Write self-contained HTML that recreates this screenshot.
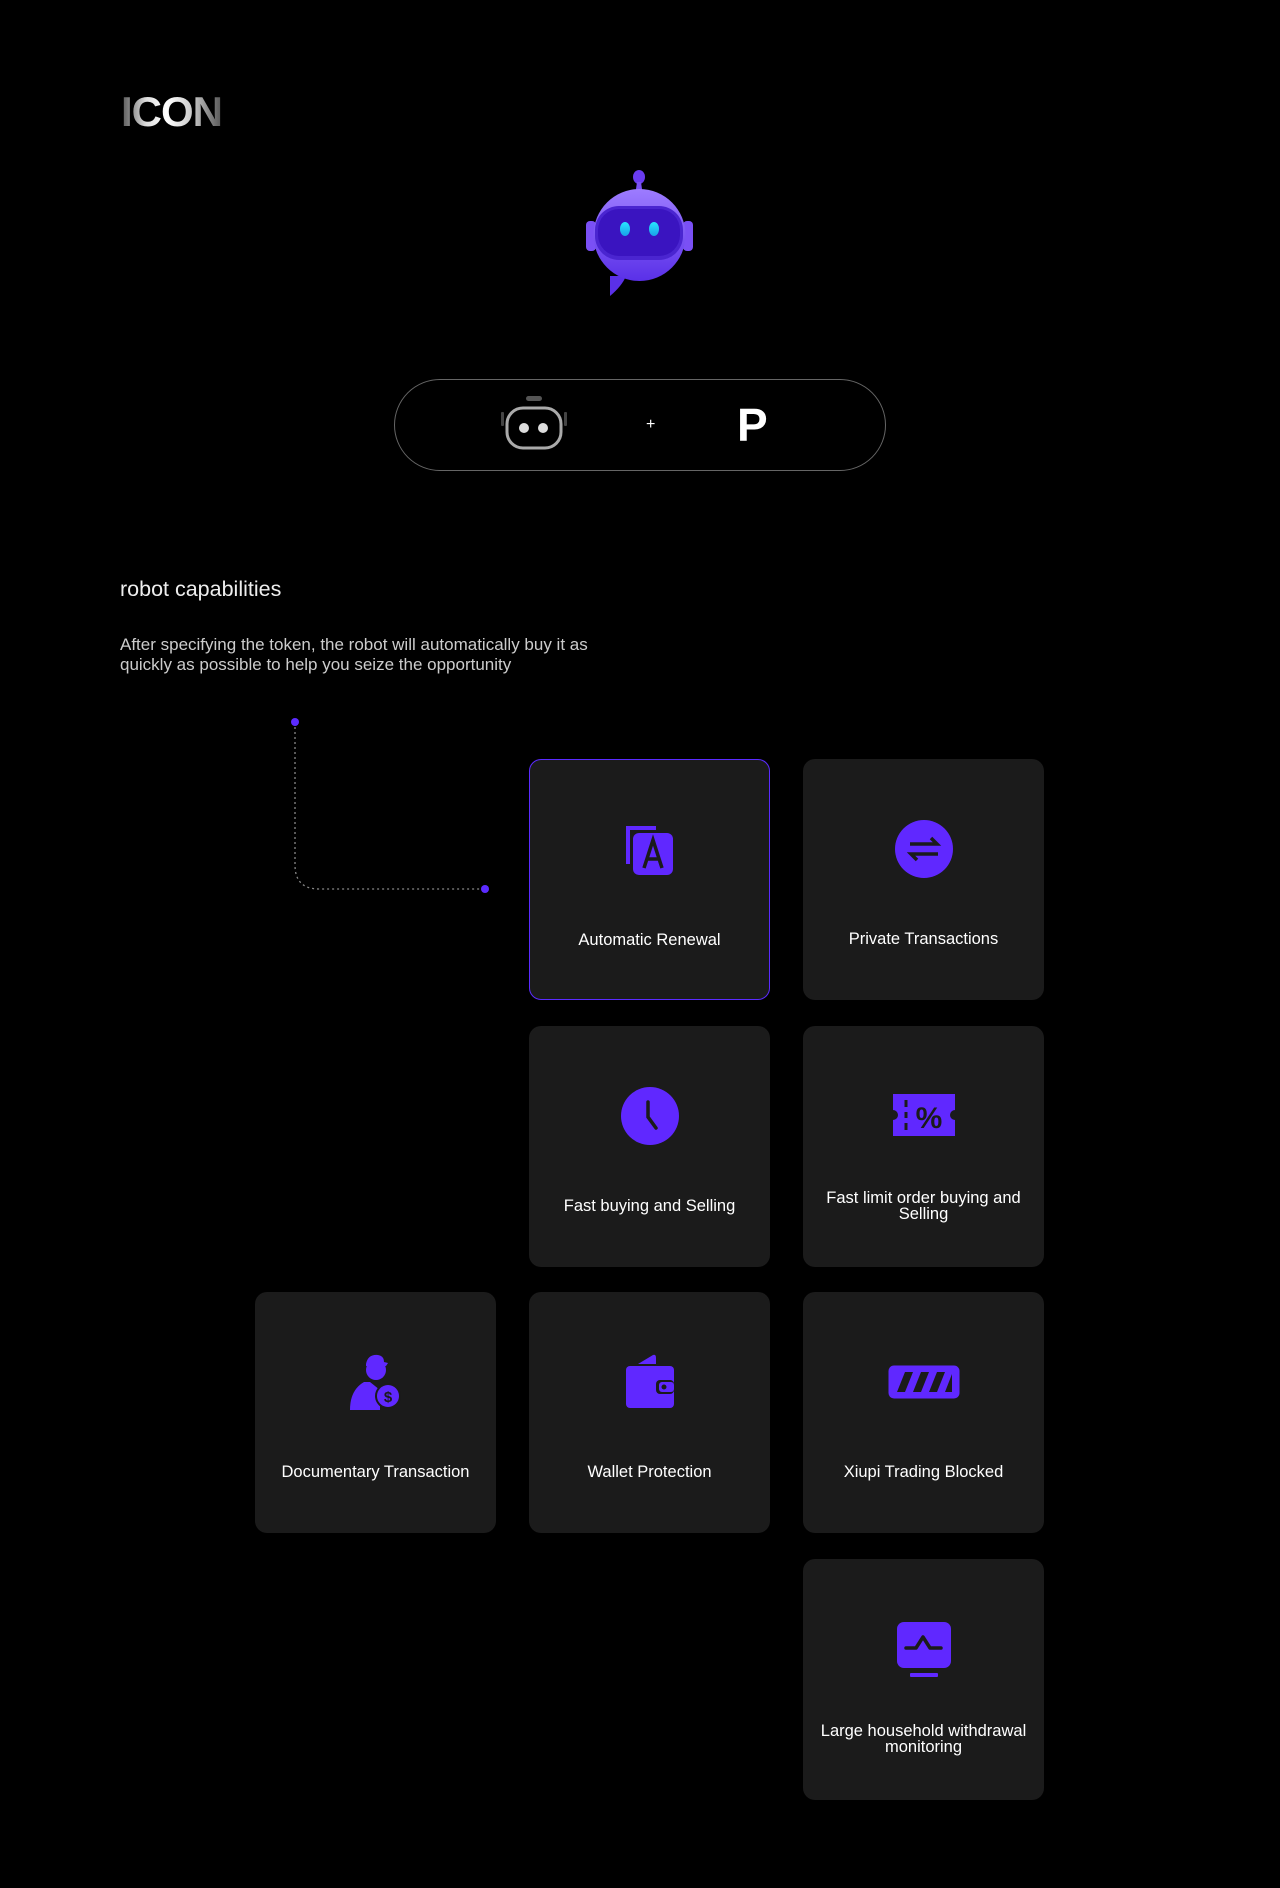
<!DOCTYPE html>
<html><head><meta charset="utf-8"><style>
*{margin:0;padding:0;box-sizing:border-box}
body{width:1280px;height:1888px;background:#000;position:relative;overflow:hidden;font-family:"Liberation Sans",sans-serif;color:#fff}
.abs{position:absolute}
.title{left:121px;top:88px;font-size:42px;font-weight:bold;letter-spacing:-1px;background:linear-gradient(90deg,#555 0%,#ddd 25%,#fff 45%,#ccc 70%,#555 100%);-webkit-background-clip:text;background-clip:text;color:transparent}
.pill{left:394px;top:379px;width:492px;height:92px;border:1px solid #666;border-radius:46px}
.card{position:absolute;width:241px;height:241px;background:#1b1b1b;border-radius:12px}
.card.sel{border:1.5px solid #5b2bff}
.card svg{position:absolute;left:50%;top:90px;transform:translate(-50%,-50%)}
.card .lb{position:absolute;left:4px;right:4px;top:172px;text-align:center;font-size:16.5px;line-height:16px;color:#fff}
.card .lb.two{top:164px}
</style></head><body>
<div class="abs title">ICON</div>

<svg class="abs" style="left:582px;top:168px" width="115" height="128" viewBox="0 0 115 128">
<defs><linearGradient id="hg" x1="0" y1="0" x2="0" y2="1"><stop offset="0" stop-color="#9d7cff"/><stop offset="1" stop-color="#5a30e8"/></linearGradient>
<linearGradient id="eg" x1="0" y1="0" x2="0" y2="1"><stop offset="0" stop-color="#28e7ff"/><stop offset="1" stop-color="#1aa0e8"/></linearGradient></defs>
<ellipse cx="57" cy="9" rx="6" ry="7" fill="#6a3cf0"/>
<path d="M55 14 L59 14 L61 28 L53 28Z" fill="#7a50f5"/>
<rect x="4" y="53" width="10" height="30" rx="4" fill="#7a50f5"/>
<rect x="101" y="53" width="10" height="30" rx="4" fill="#7a50f5"/>
<path d="M28 108 L28 128 Q40 118 44 108Z" fill="#5a30e8"/>
<ellipse cx="57.5" cy="67" rx="46" ry="46" fill="url(#hg)"/>
<rect x="13" y="38" width="88" height="54" rx="24" fill="#4a25d0"/>
<rect x="16" y="41" width="82" height="47" rx="21" fill="#3a14c0"/>
<ellipse cx="43" cy="61" rx="5" ry="7" fill="url(#eg)"/>
<ellipse cx="72" cy="61" rx="5" ry="7" fill="url(#eg)"/>
</svg>

<div class="abs pill"></div>
<svg class="abs" style="left:492px;top:394px" width="84" height="56" viewBox="0 0 84 56">
<rect x="34" y="2" width="16" height="5" rx="2.5" fill="#555"/>
<rect x="9" y="18" width="3" height="14" rx="1" fill="#444"/>
<rect x="72" y="18" width="3" height="14" rx="1" fill="#444"/>
<rect x="15" y="14" width="54" height="40" rx="16" fill="none" stroke="#aaa" stroke-width="3"/>
<circle cx="32" cy="34" r="5" fill="#ddd"/><circle cx="51" cy="34" r="5" fill="#ddd"/>
</svg>
<div class="abs" style="left:646px;top:416px;font-size:16px">+</div>
<div class="abs" style="left:737px;top:398px;font-size:46px;font-weight:bold">P</div>

<div class="abs" style="left:120px;top:577px;font-size:21.5px;color:#eee">robot capabilities</div>
<div class="abs" style="left:120px;top:635px;font-size:17px;line-height:20px;color:#ccc;width:640px">After specifying the token, the robot will automatically buy it as<br>quickly as possible to help you seize the opportunity</div>

<svg class="abs" style="left:288px;top:715px" width="205" height="182" viewBox="0 0 205 182">
<path d="M7 7 L7 150 Q7 174 31 174 L197 174" fill="none" stroke="#888" stroke-width="1.3" stroke-dasharray="2 3"/>
<circle cx="7" cy="7" r="4" fill="#5b2bff"/><circle cx="197" cy="174" r="4" fill="#5b2bff"/>
</svg>

<div class="card sel" style="left:529px;top:759px">
<svg width="60" height="60" viewBox="0 0 60 60"><path d="M6 6 H36 V10 H10 V44 H6Z" fill="#6028ff"/><rect x="13" y="13" width="40" height="42" rx="6" fill="#6028ff"/><path d="M24 48 L33 20 L42 48 M27 39 H39" stroke="#1b1b1b" stroke-width="3.5" fill="none"/></svg>
<div class="lb">Automatic Renewal</div></div>

<div class="card" style="left:803px;top:759px">
<svg width="60" height="60" viewBox="0 0 60 60"><circle cx="30" cy="30" r="29" fill="#6028ff"/><path d="M16 25 H43 L37 19 M44 35 H17 L23 41" stroke="#1b1b1b" stroke-width="3.5" fill="none"/></svg>
<div class="lb">Private Transactions</div></div>

<div class="card" style="left:529px;top:1026px">
<svg width="60" height="60" viewBox="0 0 60 60"><circle cx="30" cy="30" r="29" fill="#6028ff"/><path d="M28 16 V31 L36 42" stroke="#1b1b1b" stroke-width="3.5" fill="none" stroke-linecap="round"/></svg>
<div class="lb">Fast buying and Selling</div></div>

<div class="card" style="left:803px;top:1026px">
<svg width="66" height="60" viewBox="0 0 66 60"><path d="M2 8 H64 V24 A5 5 0 0 0 64 34 V50 H2 V34 A5 5 0 0 0 2 24Z" fill="#6028ff"/><path d="M15 14 V21 M15 26 V32 M15 37 V44" stroke="#1b1b1b" stroke-width="3"/><text x="38" y="42" font-family="Liberation Sans" font-weight="bold" font-size="30" fill="#1b1b1b" text-anchor="middle">%</text></svg>
<div class="lb two">Fast limit order buying and Selling</div></div>

<div class="card" style="left:255px;top:1292px">
<svg width="64" height="64" viewBox="0 0 64 64"><circle cx="32" cy="20" r="10" fill="#6028ff"/><path d="M22 14 Q24 4 34 5 Q40 6 40 12 L44 13 L42 16 L22 16Z" fill="#6028ff"/><path d="M20 32 Q6 40 6 60 H36 L36 40 L26 32Z" fill="#6028ff"/><circle cx="44" cy="46" r="13" fill="#1b1b1b"/><circle cx="44" cy="46" r="11" fill="#6028ff"/><text x="44" y="52" font-family="Liberation Sans" font-weight="bold" font-size="15" fill="#1b1b1b" text-anchor="middle">$</text></svg>
<div class="lb">Documentary Transaction</div></div>

<div class="card" style="left:529px;top:1292px">
<svg width="60" height="60" viewBox="0 0 60 60"><path d="M18 12 L33 3 Q36 2 36 6 V12Z" fill="#6028ff"/><rect x="6" y="14" width="48" height="42" rx="4" fill="#6028ff"/><rect x="36" y="28" width="18" height="14" rx="4" fill="#1b1b1b"/><rect x="39" y="30" width="15" height="10" rx="3" fill="#6028ff"/><circle cx="44" cy="35" r="2.5" fill="#1b1b1b"/></svg>
<div class="lb">Wallet Protection</div></div>

<div class="card" style="left:803px;top:1292px">
<svg width="74" height="60" viewBox="0 0 74 60"><rect x="3" y="15" width="68" height="30" rx="4" fill="#6028ff"/><path d="M10 40 L18 20 H26 L18 40Z M26 40 L34 20 H42 L34 40Z M42 40 L50 20 H58 L50 40Z M58 40 L65 22 V40Z" fill="#1b1b1b"/><rect x="3" y="15" width="68" height="30" rx="4" fill="none" stroke="#6028ff" stroke-width="3"/></svg>
<div class="lb">Xiupi Trading Blocked</div></div>

<div class="card" style="left:803px;top:1559px">
<svg width="60" height="60" viewBox="0 0 60 60"><rect x="3" y="3" width="54" height="46" rx="7" fill="#6028ff"/><rect x="16" y="54" width="28" height="4" rx="1" fill="#6028ff"/><path d="M12 29 H22 L29 18 L36 29 H47" stroke="#1b1b1b" stroke-width="3.5" fill="none" stroke-linecap="round" stroke-linejoin="round"/></svg>
<div class="lb two">Large household withdrawal monitoring</div></div>
</body></html>
